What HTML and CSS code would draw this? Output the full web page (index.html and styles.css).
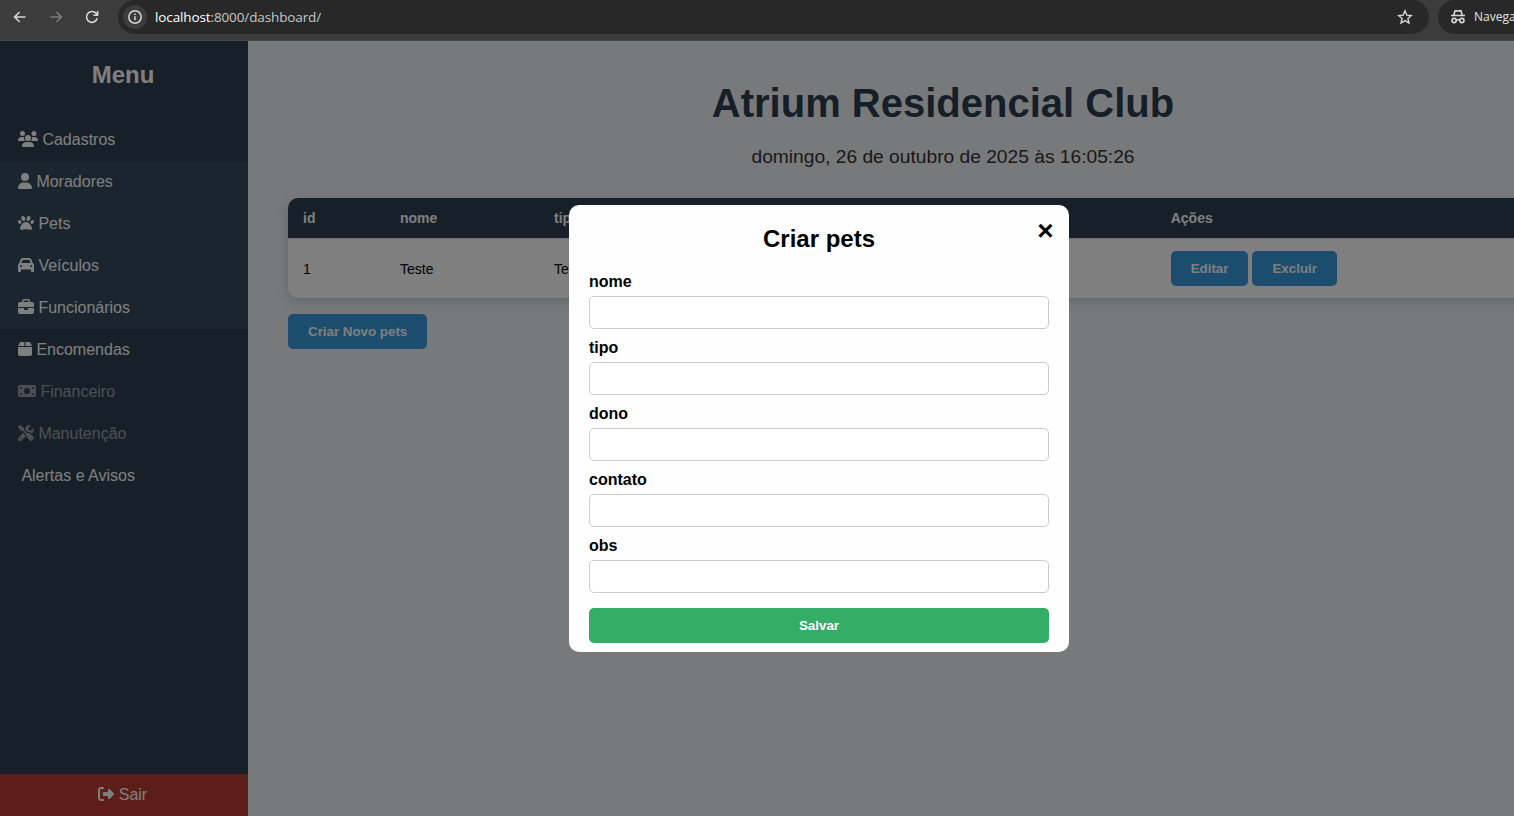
FILE: index.html
```html
<!DOCTYPE html>
<html lang="pt-BR">
<head>
<meta charset="utf-8">
<title>Atrium Residencial Club</title>
<link rel="stylesheet" href="styles.css">
</head>
<body>
<header class="browser">
  <div class="nav-buttons">
    <svg class="nav-icon" viewBox="0 0 16 16"><path d="M13.500 8H3M7.600 3 2.600 8l5 5"/></svg>
    <svg class="nav-icon nav-off" viewBox="0 0 16 16"><path d="M2.500 8H13M8.400 3l5 5-5 5"/></svg>
    <svg class="nav-icon" viewBox="0 0 16 16"><path d="M13.200 9.200A5.400 5.400 0 1 1 12.200 4.600L13.600 6M13.600 2v4.200H9.400"/></svg>
  </div>
  <div class="omnibox">
    <span class="site-info"><svg class="info-icon" viewBox="0 0 16 16"><circle cx="8" cy="8" r="6.200"/><path d="M8 7.200v4M8 4.600v1.500"/></svg></span>
    <span class="url"><span class="host">localhost</span>:8000/dashboard/</span>
    <svg class="star" viewBox="0 0 16 16"><path d="M8 1.800 9.800 6.100l4.600.4-3.500 3 1.100 4.500L8 11.600l-4 2.400 1.100-4.500-3.500-3 4.600-.4z"/></svg>
  </div>
  <div class="incognito">
    <svg class="spy" viewBox="0 0 16 16"><path d="M1 6.500h14M3.900 6l1-4 1.300-.3L8 2.200l1.800-.5 1.300.3 1 4M6.200 11.300q1.800-1 3.600 0"/><circle cx="4.100" cy="11.500" r="2.100"/><circle cx="11.900" cy="11.500" r="2.100"/></svg>
    <span>Navegação anônima</span>
  </div>
</header>
<div class="viewport">
  <aside class="sidebar">
    <h2 class="menu-title">Menu</h2>
    <nav class="menu">
      <a class="item"><svg class="fa w20" viewBox="0 0 640 512"><path d="M144 0a80 80 0 1 1 0 160A80 80 0 1 1 144 0zM512 0a80 80 0 1 1 0 160A80 80 0 1 1 512 0zM0 298.700C0 239.800 47.800 192 106.700 192h42.700c15.900 0 31 3.500 44.600 9.700c-1.300 7.200-1.900 14.700-1.900 22.300c0 38.200 16.800 72.500 43.300 96H21.300C9.600 320 0 310.400 0 298.700zM405.300 320h-.7c26.600-23.500 43.300-57.800 43.300-96c0-7.600-.7-15-1.900-22.300c13.600-6.300 28.700-9.700 44.600-9.700h42.700C592.200 192 640 239.800 640 298.700c0 11.800-9.600 21.300-21.300 21.300H405.300zM224 224a96 96 0 1 1 192 0 96 96 0 1 1 -192 0zM128 485.300C128 411.700 187.700 352 261.300 352H378.700C452.300 352 512 411.700 512 485.300c0 14.700-11.900 26.700-26.700 26.700H154.700c-14.700 0-26.700-11.900-26.700-26.700z"/></svg>Cadastros</a>
      <div class="submenu">
        <a class="item"><svg class="fa w14" viewBox="0 0 448 512"><path d="M224 256A128 128 0 1 0 224 0a128 128 0 1 0 0 256zm-45.700 48C79.800 304 0 383.800 0 482.300C0 498.700 13.300 512 29.700 512H418.300c16.400 0 29.700-13.300 29.700-29.700C448 383.800 368.200 304 269.700 304H178.300z"/></svg>Moradores</a>
        <a class="item"><svg class="fa w16" viewBox="0 0 512 512"><path d="M226.500 92.900c14.300 42.900-.3 86.200-32.600 96.800s-70.100-15.600-84.400-58.500s.3-86.200 32.600-96.800s70.100 15.600 84.400 58.500zM100.400 198.600c18.900 32.400 14.300 70.100-10.200 84.100s-59.700-.9-78.500-33.300S-2.700 179.300 21.800 165.300s59.700 .9 78.500 33.300zM69.200 401.200C121.600 259.900 214.700 224 256 224s134.400 35.900 186.800 177.200c3.600 9.700 5.200 20.100 5.200 30.500v1.600c0 25.800-20.900 46.700-46.700 46.700c-11.500 0-22.900-1.400-34-4.200l-88-22c-15.300-3.800-31.300-3.800-46.600 0l-88 22c-11.100 2.800-22.500 4.200-34 4.200C84.900 480 64 459.100 64 433.300v-1.600c0-10.400 1.600-20.800 5.200-30.500zM421.800 282.700c-24.500-14-29.100-51.700-10.200-84.100s54-47.300 78.500-33.300s29.100 51.700 10.200 84.100s-54 47.300-78.500 33.300zM310.100 189.700c-32.300-10.600-46.900-53.900-32.600-96.800s52.100-69.100 84.400-58.500s46.900 53.900 32.600 96.800s-52.100 69.100-84.400 58.500z"/></svg>Pets</a>
        <a class="item"><svg class="fa w16" viewBox="0 0 512 512"><path d="M135.200 117.400L109.100 192H402.900l-26.100-74.600C372.300 104.600 360.200 96 346.600 96H165.400c-13.600 0-25.700 8.600-30.200 21.400zM39.600 196.800L74.800 96.300C88.300 57.800 124.600 32 165.400 32H346.600c40.800 0 77.100 25.800 90.600 64.300l35.200 100.500c23.200 9.600 39.600 32.500 39.600 59.200V448c0 17.700-14.300 32-32 32H448c-17.700 0-32-14.300-32-32V400H96v48c0 17.700-14.300 32-32 32H32c-17.700 0-32-14.300-32-32V256c0-26.700 16.400-49.600 39.600-59.200zM128 288a32 32 0 1 0 -64 0 32 32 0 1 0 64 0zm288 32a32 32 0 1 0 0-64 32 32 0 1 0 0 64z"/></svg>Veículos</a>
        <a class="item"><svg class="fa w16" viewBox="0 0 512 512"><path d="M184 48H328c4.400 0 8 3.600 8 8V96H176V56c0-4.400 3.600-8 8-8zm-56 8V96H64C28.700 96 0 124.700 0 160v96H512V160c0-35.300-28.700-64-64-64H384V56c0-30.900-25.100-56-56-56H184c-30.900 0-56 25.100-56 56zM512 288H320v32c0 17.700-14.300 32-32 32H224c-17.700 0-32-14.300-32-32V288H0V416c0 35.300 28.700 64 64 64H448c35.300 0 64-28.700 64-64V288z"/></svg>Funcionários</a>
      </div>
      <a class="item"><svg class="fa w14" viewBox="0 0 448 512"><path d="M50.700 58.500L0 160H208V32H93.700C75.500 32 58.900 42.300 50.700 58.500zM240 160H448L397.300 58.500C389.100 42.300 372.500 32 354.300 32H240V160zm208 32H0V416c0 35.300 28.700 64 64 64H384c35.300 0 64-28.700 64-64V192z"/></svg>Encomendas</a>
      <a class="item disabled"><svg class="fa w18" viewBox="0 0 576 512"><path fill-rule="evenodd" d="M64 64C28.700 64 0 92.700 0 128V384c0 35.300 28.700 64 64 64H512c35.300 0 64-28.700 64-64V128c0-35.300-28.700-64-64-64H64zm64 320H64V320c35.300 0 64 28.700 64 64zM64 192V128h64c0 35.300-28.700 64-64 64zM448 384c0-35.300 28.700-64 64-64v64H448zm64-192c-35.300 0-64-28.700-64-64h64v64zM288 160a96 96 0 1 1 0 192 96 96 0 1 1 0-192z"/></svg>Financeiro</a>
      <a class="item disabled"><svg class="fa w16" viewBox="0 0 512 512"><path d="M78.600 5C69.100-2.400 55.600-1.500 47 7L7 47c-8.500 8.500-9.400 22-2.100 31.600l80 104c4.500 5.900 11.600 9.400 19 9.400h54.100l109 109c-14.700 29-10 65.400 14.300 89.600l112 112c12.500 12.500 32.800 12.500 45.300 0l64-64c12.500-12.500 12.500-32.800 0-45.300l-112-112c-24.200-24.200-60.600-29-89.600-14.300l-109-109V104c0-7.500-3.500-14.500-9.400-19L78.600 5zM19.900 396.100C7.200 408.800 0 426.100 0 444.100C0 481.600 30.400 512 67.900 512c18 0 35.300-7.200 48-19.900L233.700 374.300c-7.800-20.900-9-43.600-3.600-65.100l-61.700-61.700L19.900 396.100zM512 144c0-10.500-1.100-20.700-3.200-30.500c-2.400-11.200-16.100-14.100-24.200-6l-63.900 63.900c-3 3-7.100 4.700-11.300 4.700H352c-8.800 0-16-7.200-16-16V102.600c0-4.200 1.700-8.300 4.700-11.300l63.900-63.900c8.100-8.100 5.200-21.800-6-24.200C388.700 1.100 378.500 0 368 0C288.500 0 224 64.500 224 144l0 .8 85.300 85.300c36-9.100 75.800 .5 104 28.700L429 274.500c49-23 83-72.800 83-130.500zM56 432a24 24 0 1 1 48 0 24 24 0 1 1 -48 0z"/></svg>Manutenção</a>
      <a class="item alerts">Alertas e Avisos</a>
    </nav>
    <a class="item logout"><svg class="fa w16" viewBox="0 0 512 512"><path d="M377.900 105.900L500.700 228.700c7.200 7.200 11.300 17.100 11.300 27.300s-4.100 20.100-11.300 27.300L377.900 406.100c-6.400 6.400-15 9.900-24 9.900c-18.700 0-33.900-15.200-33.900-33.900l0-62.100-128 0c-17.700 0-32-14.300-32-32l0-64c0-17.700 14.300-32 32-32l128 0 0-62.100c0-18.700 15.200-33.900 33.900-33.900c9 0 17.600 3.600 24 9.900zM160 96L96 96c-17.700 0-32 14.300-32 32l0 256c0 17.700 14.300 32 32 32l64 0c17.700 0 32 14.300 32 32s-14.300 32-32 32l-64 0c-53 0-96-43-96-96L0 128C0 75 43 32 96 32l64 0c17.700 0 32 14.300 32 32s-14.300 32-32 32z"/></svg>Sair</a>
  </aside>
  <main class="content">
    <h1 class="title">Atrium Residencial Club</h1>
    <p class="date">domingo, 26 de outubro de 2025 às 16:05:26</p>
    <table class="table">
      <colgroup><col class="c-id"><col class="c-nome"><col class="c-tipo"><col class="c-acoes"></colgroup>
      <thead><tr><th>id</th><th>nome</th><th>tipo</th><th>Ações</th></tr></thead>
      <tbody><tr><td>1</td><td>Teste</td><td>Teste</td><td><button class="btn">Editar</button><button class="btn">Excluir</button></td></tr></tbody>
    </table>
    <button class="btn">Criar Novo pets</button>
  </main>
  <div class="overlay">
    <form class="modal">
      <span class="close">×</span>
      <h2 class="modal-title">Criar pets</h2>
      <label class="label">nome</label><input class="input" type="text">
      <label class="label">tipo</label><input class="input" type="text">
      <label class="label">dono</label><input class="input" type="text">
      <label class="label">contato</label><input class="input" type="text">
      <label class="label">obs</label><input class="input" type="text">
      <button class="btn save" type="button">Salvar</button>
    </form>
  </div>
</div>
</body>
</html>
```
FILE: styles.css
```css
* { box-sizing: border-box; }
html { overflow: hidden; }
body {
  margin: 0;
  width: 1638px;
  height: 816px;
  display: flex;
  flex-direction: column;
  overflow: hidden;
  font-family: "Liberation Sans", Arial, sans-serif;
  font-size: 16px;
}

/* Browser toolbar */
.browser {
  height: 41px;
  flex: none;
  display: flex;
  align-items: flex-start;
  background: #3c3c3c;
  border-bottom: 1px solid #4a4a4a;
  color: #e3e3e3;
  font-family: "Open Sans", "Noto Sans", sans-serif;
}
.nav-buttons {
  width: 118px;
  height: 34px;
  display: flex;
  align-items: center;
  gap: 20px;
  padding-left: 12px;
}
.nav-icon, .info-icon, .star, .spy {
  width: 16px;
  height: 16px;
  fill: none;
  stroke: #d6d6d6;
  stroke-width: 1.6;
}
.nav-off { stroke: #7b7b7b; }
.omnibox {
  width: 1311px;
  height: 34px;
  display: flex;
  align-items: center;
  padding: 0 16px 0 5px;
  background: #282828;
  border-radius: 17px;
}
.site-info {
  width: 24px;
  height: 24px;
  display: flex;
  align-items: center;
  justify-content: center;
  border-radius: 50%;
  background: #3c3c3c;
}
.info-icon { stroke-width: 1.5; }
.url {
  flex: 1;
  margin-left: 8px;
  font-size: 13.5px;
  letter-spacing: -.12px;
  line-height: 18px;
  color: #c7c7c7;
}
.host { color: #fff; }
.star { stroke-width: 1.4; }
.incognito {
  height: 34px;
  flex: 1;
  display: flex;
  align-items: center;
  gap: 8px;
  margin-left: 9px;
  padding-left: 12px;
  white-space: nowrap;
  background: #282828;
  border-radius: 17px 0 0 17px;
  font-size: 12px;
  line-height: 16px;
}
.incognito span { margin-bottom: 1px; }
.spy { stroke-width: 1.6; }

/* Page */
.viewport {
  position: relative;
  flex: 1;
  display: flex;
  background: #f0f2f5;
}
.sidebar {
  width: 248px;
  display: flex;
  flex-direction: column;
  background: #2f3e50;
  color: #fff;
}
.menu-title {
  margin: 20px 0 30px;
  padding-right: 2px;
  font-size: 24px;
  line-height: 28px;
  text-align: center;
}
.menu { flex: 1; }
.item {
  height: 42px;
  display: flex;
  align-items: center;
  padding-left: 18px;
  line-height: 18px;
}
.alerts { padding-left: 21.4px; }
.submenu { background: #374b5e; }
.disabled { opacity: .5; }
.fa {
  height: 16px;
  margin: 0 4.4px 2px 0;
  fill: currentColor;
}
.w14 { width: 14px; }
.w16 { width: 16px; }
.w18 { width: 18px; }
.w20 { width: 20px; }
.logout {
  justify-content: center;
  padding: 0 2.5px 0 0;
  background: #bb3a31;
}
.content {
  flex: 1;
  padding: 39px 40px 40px;
}
.title {
  margin: 0;
  font-size: 40px;
  line-height: 46px;
  text-align: center;
  color: #2c3e50;
}
.date {
  margin: 19px 0 30px;
  font-size: 19.2px;
  line-height: 23px;
  text-align: center;
  color: #333;
}
.table {
  width: 100%;
  table-layout: fixed;
  border-collapse: separate;
  border-spacing: 0;
  margin-bottom: 16px;
  overflow: hidden;
  border-radius: 10px;
  background: #fff;
  box-shadow: 0 4px 12px rgba(0, 0, 0, .15);
  font-size: 14px;
  line-height: 16px;
  text-align: left;
}
.c-id { width: 97px; }
.c-nome { width: 154px; }
.c-tipo { width: 616.7px; }
th {
  padding: 12px 15px;
  background: #2f3e50;
  color: #fff;
  border-bottom: 1px solid #ddd;
}
td { padding: 12px 15px; }
.btn {
  height: 35px;
  padding: 0 20px;
  border: 0;
  border-radius: 5px;
  background: #3b9bdc;
  color: #fff;
  font: bold 13.333px "Liberation Sans", Arial, sans-serif;
  vertical-align: top;
}
.btn + .btn { margin-left: 4px; }

/* Modal */
.overlay {
  position: absolute;
  inset: 0;
  display: flex;
  align-items: center;
  justify-content: center;
  background: rgba(0, 0, 0, .5);
}
.modal {
  position: relative;
  width: 500px;
  height: 447px;
  padding: 20px;
  border-radius: 10px;
  background: #fefefe;
}
.close {
  position: absolute;
  top: 10px;
  right: 15.5px;
  font-size: 28px;
  font-weight: bold;
  line-height: 32px;
}
.modal-title {
  margin: 0 0 20px;
  font-size: 24px;
  line-height: 28px;
  text-align: center;
}
.label {
  display: block;
  margin-bottom: 5px;
  font-weight: bold;
  line-height: 18px;
}
.input {
  display: block;
  width: 100%;
  height: 33px;
  margin-bottom: 10px;
  border: 1px solid #ccc;
  border-radius: 5px;
  background: #fff;
}
.save {
  width: 100%;
  margin-top: 5px;
  background: #34ad67;
}
```
